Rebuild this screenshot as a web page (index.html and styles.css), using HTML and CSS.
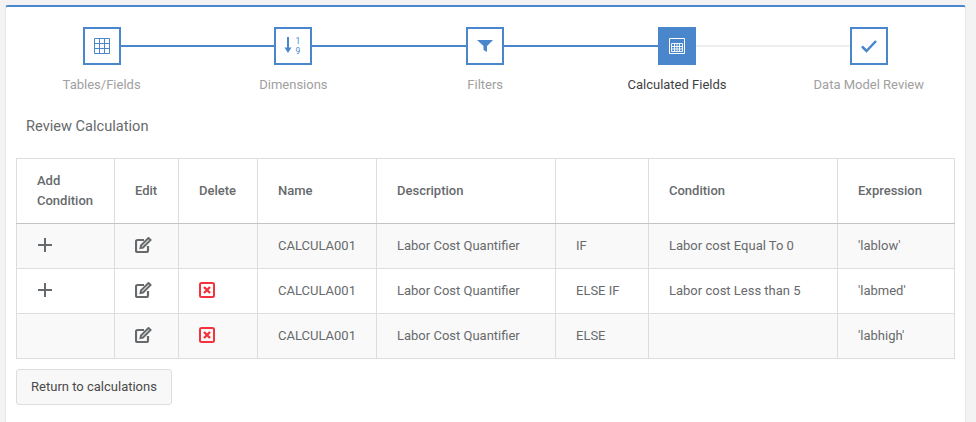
FILE: index.html
```html
<!DOCTYPE html>
<html lang="en">
<head>
    <meta charset="UTF-8">
    <title>Review Calculation</title>
    <link rel="stylesheet" href="styles.css">
</head>
<body>
    <div class="panel">
        <div class="wizard">
            <div class="step done">
                <div class="step-box">
                    <svg width="16" height="16" viewBox="0 0 16 16"><path d="M.5.5h15v15H.5zM.5 5.5h15M.5 10.5h15M5.5.5v15M10.5.5v15" fill="none" stroke="currentColor"/></svg>
                </div>
                <div class="step-label">Tables/Fields</div>
            </div>
            <div class="step done">
                <div class="step-box">
                    <svg width="18" height="18" viewBox="0 0 18 18"><path d="M4 0v11" stroke="currentColor" stroke-width="2"/><path d="M.5 10.500h7L4 16z" fill="currentColor"/><text class="sort-digit" x="14" y="7">1</text><text class="sort-digit" x="14" y="17">9</text></svg>
                </div>
                <div class="step-label">Dimensions</div>
            </div>
            <div class="step done">
                <div class="step-box">
                    <svg width="16" height="12" viewBox="0 0 16 12"><path d="M0 0h16l-6 6v6l-3.500-2V6z" fill="currentColor"/></svg>
                </div>
                <div class="step-label">Filters</div>
            </div>
            <div class="step current">
                <div class="step-box">
                    <svg width="16" height="16" viewBox="0 0 16 16"><path d="M.5.5h15v15H.5z" fill="none" stroke="currentColor"/><path d="M2.500 5.500h11v8h-11zM2.500 8.500h11M2.500 11h11M5.500 5.500v8M8 5.500v8M10.500 5.500v8" fill="none" stroke="currentColor" stroke-width=".9"/></svg>
                </div>
                <div class="step-label">Calculated Fields</div>
            </div>
            <div class="step">
                <div class="step-box">
                    <svg width="16" height="14" viewBox="0 0 16 14"><path d="M1 7.500l4.500 4.500L15 2" fill="none" stroke="currentColor" stroke-width="2.500"/></svg>
                </div>
                <div class="step-label">Data Model Review</div>
            </div>
        </div>

        <h2 class="section-title">Review Calculation</h2>

        <table class="calc-table">
            <thead>
                <tr>
                    <th class="col-add">Add Condition</th>
                    <th class="col-edit">Edit</th>
                    <th class="col-delete">Delete</th>
                    <th class="col-name">Name</th>
                    <th class="col-desc">Description</th>
                    <th class="col-type"></th>
                    <th class="col-cond">Condition</th>
                    <th>Expression</th>
                </tr>
            </thead>
            <tbody>
                <tr>
                    <td><svg class="icon-plus" width="16" height="16" viewBox="0 0 16 16"><path d="M8 1v14M1 8h14" stroke="currentColor" stroke-width="2"/></svg></td>
                    <td><svg class="icon-edit" width="17" height="16" viewBox="0 0 17 16"><path d="M9 3H2.500A1.500 1.500 0 0 0 1 4.500v9A1.500 1.500 0 0 0 2.500 15h9a1.500 1.500 0 0 0 1.500-1.500V9" fill="none" stroke="currentColor" stroke-width="2.200"/><path d="M6 8.500L13.500 1l2 2L8 10.500l-2.500.5z" fill="none" stroke="currentColor" stroke-width="2"/></svg></td>
                    <td></td>
                    <td>CALCULA001</td>
                    <td>Labor Cost Quantifier</td>
                    <td>IF</td>
                    <td>Labor cost Equal To 0</td>
                    <td>'lablow'</td>
                </tr>
                <tr>
                    <td><svg class="icon-plus" width="16" height="16" viewBox="0 0 16 16"><path d="M8 1v14M1 8h14" stroke="currentColor" stroke-width="2"/></svg></td>
                    <td><svg class="icon-edit" width="17" height="16" viewBox="0 0 17 16"><path d="M9 3H2.500A1.500 1.500 0 0 0 1 4.500v9A1.500 1.500 0 0 0 2.500 15h9a1.500 1.500 0 0 0 1.500-1.500V9" fill="none" stroke="currentColor" stroke-width="2.200"/><path d="M6 8.500L13.500 1l2 2L8 10.500l-2.500.5z" fill="none" stroke="currentColor" stroke-width="2"/></svg></td>
                    <td><svg class="icon-delete" width="16" height="16" viewBox="0 0 16 16"><rect x="1" y="1" width="14" height="14" rx="1.500" fill="none" stroke="currentColor" stroke-width="2"/><path d="M5 5l6 6M11 5l-6 6" stroke="currentColor" stroke-width="2.400"/></svg></td>
                    <td>CALCULA001</td>
                    <td>Labor Cost Quantifier</td>
                    <td>ELSE IF</td>
                    <td>Labor cost Less than 5</td>
                    <td>'labmed'</td>
                </tr>
                <tr>
                    <td></td>
                    <td><svg class="icon-edit" width="17" height="16" viewBox="0 0 17 16"><path d="M9 3H2.500A1.500 1.500 0 0 0 1 4.500v9A1.500 1.500 0 0 0 2.500 15h9a1.500 1.500 0 0 0 1.500-1.500V9" fill="none" stroke="currentColor" stroke-width="2.200"/><path d="M6 8.500L13.500 1l2 2L8 10.500l-2.500.5z" fill="none" stroke="currentColor" stroke-width="2"/></svg></td>
                    <td><svg class="icon-delete" width="16" height="16" viewBox="0 0 16 16"><rect x="1" y="1" width="14" height="14" rx="1.500" fill="none" stroke="currentColor" stroke-width="2"/><path d="M5 5l6 6M11 5l-6 6" stroke="currentColor" stroke-width="2.400"/></svg></td>
                    <td>CALCULA001</td>
                    <td>Labor Cost Quantifier</td>
                    <td>ELSE</td>
                    <td></td>
                    <td>'labhigh'</td>
                </tr>
            </tbody>
        </table>

        <button class="btn" type="button">Return to calculations</button>
    </div>
</body>
</html>
```

FILE: styles.css
```css
body {
    font-family: Roboto, Arial, sans-serif;
    font-size: 13px;
    color: #676a6c;
    background-color: #f3f3f4;
    margin: 0;
    padding: 5px 0 0 5px;
    height: 417px;
    overflow: hidden;
}

.panel {
    width: 961px;
    height: 417px;
    box-sizing: border-box;
    background-color: white;
    border-top: 2px solid #4a86cc;
    border-left: 1px solid #e7e7e7;
    border-right: 1px solid #e7e7e7;
    border-radius: 3px 3px 0 0;
    padding: 20px 10px 0 10px;
}

.wizard {
    display: flex;
    margin: 0 -9.7px 0 -10.3px;
}

.step {
    flex: 1;
    display: flex;
    flex-direction: column;
    align-items: center;
    position: relative;
}

/* connector to the next step */
.step::after {
    content: "";
    position: absolute;
    top: 18px;
    left: 50%;
    width: 100%;
    height: 2px;
    background-color: #eeeeee;
}

.step.done::after {
    background-color: #4a86cc;
}

.step:last-child::after {
    display: none;
}

.step-box {
    width: 38px;
    height: 38px;
    box-sizing: border-box;
    border: 2px solid #4a86cc;
    background-color: white;
    color: #4a86cc;
    display: flex;
    align-items: center;
    justify-content: center;
    position: relative;
    z-index: 1;
}

.step.current .step-box {
    background-color: #4a86cc;
    color: white;
}

.sort-digit {
    font-size: 8.5px;
    text-anchor: middle;
    fill: currentColor;
}

.step-label {
    margin-top: 12px;
    color: #a0a0a0;
}

.step.current .step-label {
    color: #3f3f3f;
}

.section-title {
    font-size: 14.6px;
    font-weight: 400;
    color: #676a6c;
    margin: 25px 0 23px 10px;
}

.calc-table {
    width: 939px;
    border-collapse: collapse;
    table-layout: fixed;
}

.calc-table th,
.calc-table td {
    box-sizing: border-box;
    border: 1px solid #dddddd;
    padding: 0 20px;
    text-align: left;
}

.calc-table th {
    height: 65px;
    font-weight: 500;
    line-height: 20px;
    border-bottom-color: #c4c4c4;
}

.calc-table td {
    height: 45px;
    padding-bottom: 2px;
}

.calc-table tbody tr:nth-child(odd) {
    background-color: #f9f9f9;
}

.calc-table svg {
    display: block;
}

.col-add { width: 98px; }
.col-edit { width: 64px; }
.col-delete { width: 79px; }
.col-name { width: 119px; }
.col-desc { width: 179px; }
.col-type { width: 93px; }
.col-cond { width: 189px; }

.icon-plus,
.icon-edit {
    color: #676a6c;
}

.icon-delete {
    color: #f5333f;
}

.btn {
    display: block;
    margin-top: 10px;
    width: 156px;
    height: 36px;
    padding-bottom: 3px;
    font-family: inherit;
    font-size: 13px;
    color: #4a4a4a;
    background-color: #f8f8f8;
    border: 1px solid #dddddd;
    border-radius: 3px;
}
```
